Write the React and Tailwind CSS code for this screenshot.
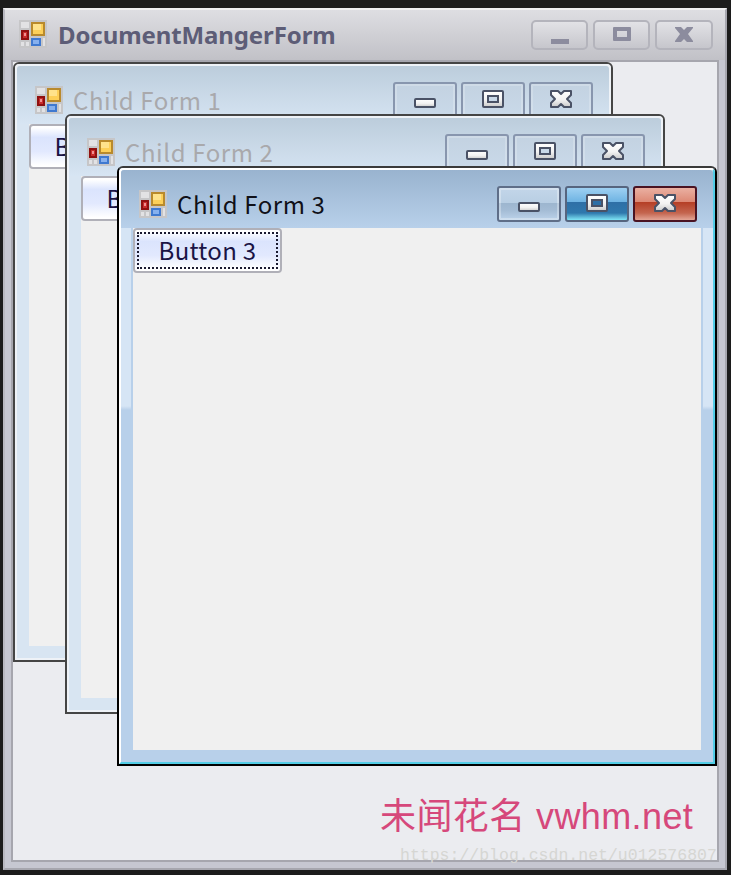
const uiFont = { fontFamily: '"Noto Sans CJK SC", "Noto Sans", sans-serif' }

function AppIcon({ className }) {
  return (
    <svg width="28" height="28" viewBox="0 0 28 28" shapeRendering="crispEdges" className={className}>
      <path d="M0 0h28v28H0z" fill="#c6c6c8" />
      <path d="M2 2h8v6H2zM2 22h3v4H2zM7 22h3v4H7zM24 18h2v8h-2z" fill="#e2e2e4" />
      <rect x="12" y="2" width="14" height="14" fill="#b98a2c" />
      <rect x="14" y="4" width="10" height="10" fill="#fdd058" />
      <rect x="14" y="4" width="8" height="6" fill="#ffe38c" />
      <rect x="2" y="10" width="8" height="10" fill="#8f1010" />
      <rect x="4" y="12" width="4" height="6" fill="#c92c2c" />
      <rect x="5" y="13" width="2" height="3" fill="#f09090" />
      <rect x="12" y="18" width="10" height="8" fill="#3f79d0" />
      <rect x="14" y="20" width="6" height="4" fill="#86b0ee" />
    </svg>
  )
}

const glyphFill = 'url(#glyphWhite)'

function MinGlyph() {
  return (
    <svg width="22" height="10" viewBox="0 0 22 10" className="mt-[6px]">
      <rect x="1" y="1" width="20" height="8" rx="1" fill={glyphFill} stroke="#4a5266" strokeWidth="2" />
    </svg>
  )
}

function MaxGlyph({ hole }) {
  return (
    <svg width="22" height="18" viewBox="0 0 22 18" className="mb-[2px]">
      <rect x="1" y="1" width="20" height="16" rx="1" fill={glyphFill} stroke="#4a5266" strokeWidth="2" />
      <rect x="6" y="6" width="10" height="6" fill={hole} stroke="#4a5266" strokeWidth="2" />
    </svg>
  )
}

function CloseGlyph() {
  return (
    <svg width="22" height="18" viewBox="0 0 22 18" className="mb-[2px]">
      <path
        d="M1 1H8L11 4L14 1H21V5L17 9L21 13V17H14L11 14L8 17H1V13L5 9L1 5Z"
        fill={glyphFill}
        stroke="#4a5266"
        strokeWidth="2"
        strokeLinejoin="round"
      />
    </svg>
  )
}

const capClass = {
  idle: 'border-[#8896ae] shadow-[inset_0_0_0_2px_rgba(255,255,255,0.2)] bg-[linear-gradient(#c3d2e1,#c9d9e9)]',
  normal:
    'border-[#5f6e88] shadow-[inset_0_0_0_2px_rgba(255,255,255,0.3)] bg-[linear-gradient(#c3d6e9_0%,#b8cee3_48%,#9db6cf_48%,#a4bcd5_70%,#bcd3ea_100%)]',
  hover: 'border-[#56657f] bg-[linear-gradient(#9ed0f2_0%,#6cb2e2_45%,#2e6fa6_45%,#2f78ad_78%,#7fe6f6_100%)]',
  close: 'border-[#4a1322] bg-[linear-gradient(#eab0a2_0%,#dc8773_45%,#b53f26_45%,#c4654f_78%,#e3a596_100%)]',
}

function CaptionButton({ kind, children }) {
  return (
    <div className={`w-[64px] h-[36px] rounded-[3px] border-2 flex items-center justify-center ${capClass[kind]}`}>
      {children}
    </div>
  )
}

function MainCaptionButton({ className, children }) {
  return (
    <div
      className={`h-[30px] rounded-[5px] border-2 border-[#b4b4bc] bg-[linear-gradient(#e2e2e6,#c6c6cc)] flex items-center justify-center ${className}`}
    >
      {children}
    </div>
  )
}

function ChildForm({ n, active, className }) {
  return (
    <div
      className={`absolute w-[600px] h-[600px] rounded-t-[6px] border-2 overflow-hidden ${
        active ? 'border-black border-t-[#3a3a3a]' : 'border-[#454545]'
      } ${className}`}
    >
      <div
        className={`w-full h-full flex flex-col border-2 rounded-t-[4px] ${
          active
            ? 'border-t-white border-l-white border-r-[#52cde6] border-b-[#52cde6]'
            : 'border-[#eef2f7]'
        }`}
      >
        <div
          className={`h-[58px] pl-[18px] pr-[16px] pt-[16px] flex items-start shrink-0 rounded-t-[3px] ${
            active ? 'bg-[linear-gradient(#99b3cf,#b8d0ea)]' : 'bg-[linear-gradient(#bccddc,#d7e5f3)]'
          }`}
        >
          <AppIcon className="mt-[4px]" />
          <div
            className={`ml-[10px] text-[24px] leading-[32px] mt-[2px] tracking-[0.6px] ${
              active ? 'text-[#101018]' : 'text-[#a9a9ac]'
            }`}
            style={uiFont}
          >
            Child Form {n}
          </div>
          <div className="ml-auto flex gap-[4px]">
            <CaptionButton kind={active ? 'normal' : 'idle'}>
              <MinGlyph />
            </CaptionButton>
            <CaptionButton kind={active ? 'hover' : 'idle'}>
              <MaxGlyph hole={active ? '#2e6fa6' : '#c9d9e9'} />
            </CaptionButton>
            <CaptionButton kind={active ? 'close' : 'idle'}>
              <CloseGlyph />
            </CaptionButton>
          </div>
        </div>
        <div className="flex-1 flex min-h-0">
          <div
            className={`w-[12px] ${
              active
                ? 'border-r-2 border-[#b8d0ea] bg-[linear-gradient(#d6e5f5_178px,#b8d0ea_182px)]'
                : 'bg-[#d8e5f2]'
            }`}
          />
          <div className="flex-1 bg-[#f0f0f0]">
            <div className="w-[149px] h-[45px] rounded-[4px] border-2 border-[#b0b0b8] bg-[linear-gradient(#ffffff_4%,#dbe4fd_28%,#e2e9fe_62%,#ffffff_96%)] p-[2px]">
              <div
                className={`w-full h-full flex items-center justify-center pb-[2px] text-[24px] tracking-[0.3px] text-[#1a1445] ${
                  active ? 'border-2 border-dotted border-[#1a1a30]' : ''
                }`}
                style={uiFont}
              >
                Button {n}
              </div>
            </div>
          </div>
          <div
            className={`w-[12px] ${
              active
                ? 'border-l-2 border-[#b8d0ea] bg-[linear-gradient(#d6e5f5_178px,#b8d0ea_182px)]'
                : 'bg-[#d8e5f2]'
            }`}
          />
        </div>
        <div className={`h-[12px] shrink-0 ${active ? 'bg-[#b8d0ea]' : 'bg-[#d8e5f2]'}`} />
      </div>
    </div>
  )
}

export default function App() {
  return (
    <div className="relative w-[731px] h-[875px] overflow-hidden bg-[#1c1c1c] pt-[8px] pl-[3px]">
      <svg width="0" height="0" className="absolute">
        <defs>
          <linearGradient id="glyphWhite" x1="0" y1="0" x2="0" y2="1">
            <stop offset="0" stopColor="#ffffff" />
            <stop offset="0.55" stopColor="#f2f2f2" />
            <stop offset="1" stopColor="#c9c9c9" />
          </linearGradient>
        </defs>
      </svg>

      <div className="w-[724px] h-[862px] flex flex-col border-2 border-b-[#a6a6ae] border-r-[#a6a6ae] border-l-[#b8b8c0] border-t-[#eeeef0] bg-[#c6c7d1]">
        <div className="h-[50px] shrink-0 flex items-start bg-[linear-gradient(#dedee2,#c1c1c7)] pl-[14px] pr-[12px] pt-[10px]">
          <AppIcon />
          <div
            className="ml-[11px] text-[24px] leading-[30px] font-bold tracking-[-0.1px] text-[#5d5d77]"
            style={{ fontFamily: '"Noto Sans", sans-serif' }}
          >
            DocumentMangerForm
          </div>
          <div className="ml-auto flex gap-[5px]">
            <MainCaptionButton className="w-[57px]">
              <div className="w-[18px] h-[5px] bg-[#8c8c9e] mt-[12px]" />
            </MainCaptionButton>
            <MainCaptionButton className="w-[57px]">
              <div className="w-[18px] h-[14px] border-[4px] border-[#8c8c9e] rounded-[1px] mb-[2px]" />
            </MainCaptionButton>
            <MainCaptionButton className="w-[58px]">
              <svg width="18" height="15" viewBox="0 0 18 15" className="mb-[2px]">
                <path d="M0 0h6l3 3 3-3h6v1l-5 6 5 7v1h-6l-3-3-3 3H0v-1l5-7-5-6z" fill="#8c8c9e" />
              </svg>
            </MainCaptionButton>
          </div>
        </div>

        <div className="flex-1 min-h-0 mx-[6px] mb-[6px] border-2 border-[#a6a6ae]">
          <div className="relative w-full h-full bg-[#ebecf0] overflow-hidden">
            <ChildForm n={1} className="left-0 top-0" />
            <ChildForm n={2} className="left-[52px] top-[52px]" />
            <ChildForm n={3} active className="left-[104px] top-[104px]" />

            <div
              className="absolute left-[367px] top-[733px] text-[36px] leading-[44px] tracking-[0.4px] text-[#d6487b] whitespace-nowrap"
              style={{ fontFamily: '"Liberation Sans", "Noto Sans CJK SC", sans-serif' }}
            >
              未闻花名 vwhm.net
            </div>
          </div>
        </div>
      </div>

      <div
        className="absolute left-[400px] top-[845px] w-[318px] overflow-hidden text-[16.5px] leading-[22px] text-[#d6d6d3] whitespace-nowrap"
        style={{ fontFamily: '"Liberation Mono", monospace' }}
      >
        https://blog.csdn.net/u012576807
      </div>
    </div>
  )
}
